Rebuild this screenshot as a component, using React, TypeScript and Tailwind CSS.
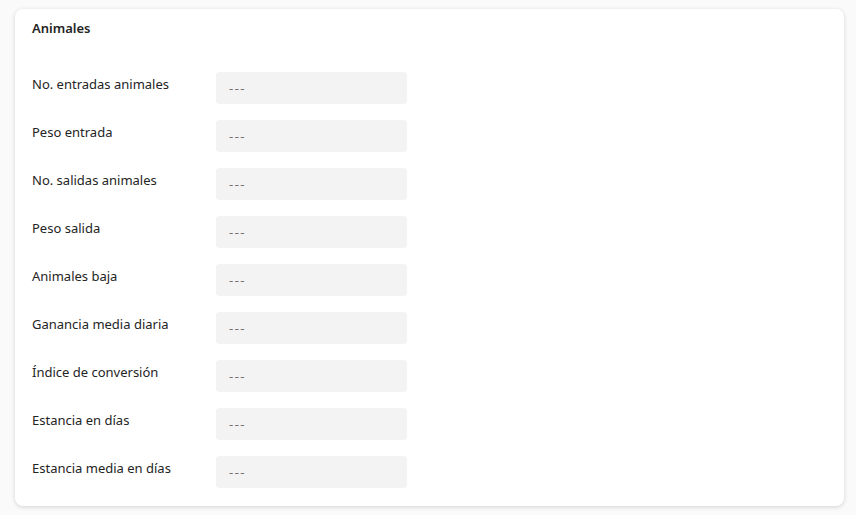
const rows = [
  "No. entradas animales",
  "Peso entrada",
  "No. salidas animales",
  "Peso salida",
  "Animales baja",
  "Ganancia media diaria",
  "Índice de conversión",
  "Estancia en días",
  "Estancia media en días",
];

export default function App() {
  return (
    <div
      className="min-h-[515px] bg-[#fafafa] pt-[9px] pl-[15px] pr-[12px] pb-[9px]"
      style={{ fontFamily: '"Segoe UI", "Noto Sans", "Open Sans", sans-serif' }}
    >
      <div className="rounded-[8px] bg-white pl-[17px] pt-[10px] pb-[18px] shadow-[0_1px_4px_rgba(0,0,0,0.16)]">
        <h2 className="text-[13px] leading-[18px] font-semibold text-[#242424]">Animales</h2>
        <div className="mt-[35px] flex flex-col gap-[16px]">
          {rows.map((label) => (
            <div key={label} className="flex items-start">
              <div className="w-[184px] pt-[3px] text-[13px] leading-[18px] text-[#242424]">{label}</div>
              <div className="flex h-[32px] w-[191px] items-center rounded-[4px] bg-[#f3f3f3] px-[13px] pt-[2px] text-[13px] tracking-[1.5px] text-[#707070]">
                ---
              </div>
            </div>
          ))}
        </div>
      </div>
    </div>
  );
}
